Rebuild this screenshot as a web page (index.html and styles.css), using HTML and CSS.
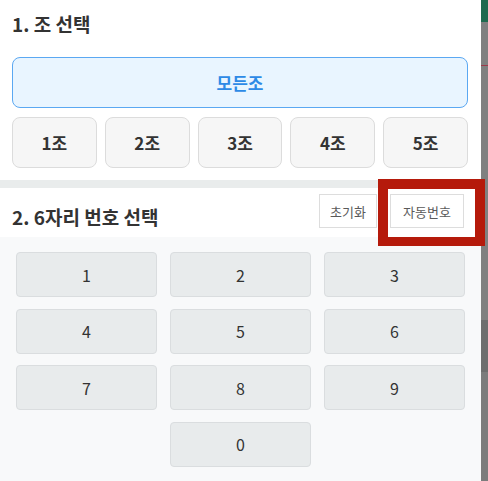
FILE: index.html
```html
<!DOCTYPE html>
<html>

<head>
  <meta charset="UTF-8" />
  <title>번호 선택</title>
  <link rel="stylesheet" href="styles.css">
</head>

<body>
  <div class="page">
    <!-- 1. group select -->
    <section class="group-section">
      <h2 class="section-title">1. 조 선택</h2>
      <button class="all-button">모든조</button>
      <div class="group-row">
        <button class="group-button">1조</button>
        <button class="group-button">2조</button>
        <button class="group-button">3조</button>
        <button class="group-button">4조</button>
        <button class="group-button">5조</button>
      </div>
    </section>

    <div class="divider"></div>

    <!-- 2. number select -->
    <div class="number-header">
      <h2 class="section-title number-title">2. 6자리 번호 선택</h2>
      <div class="header-actions">
        <button class="small-button reset-button">초기화</button>
        <button class="small-button auto-button">자동번호</button>
      </div>
    </div>

    <div class="number-pad">
      <button class="num-button">1</button>
      <button class="num-button">2</button>
      <button class="num-button">3</button>
      <button class="num-button">4</button>
      <button class="num-button">5</button>
      <button class="num-button">6</button>
      <button class="num-button">7</button>
      <button class="num-button">8</button>
      <button class="num-button">9</button>
      <button class="num-button zero">0</button>
    </div>
  </div>

  <div class="side-strip"></div>

  <div class="highlight-box"></div>
</body>

</html>
```

FILE: styles.css
```css
/* Reset default margin and padding */
* {
  margin: 0;
  padding: 0;
  box-sizing: border-box;
}

body {
  position: relative;
  display: flex;
  width: 488px;
  height: 481px;
  overflow: hidden;
  background-color: #ffffff;
  font-family: "Noto Sans CJK KR", "Noto Sans", sans-serif;
  color: #333333;
}

button {
  font-family: inherit;
  cursor: pointer;
}

.page {
  width: 481px;
  display: flex;
  flex-direction: column;
  background-color: #ffffff;
}

/* Section titles */
.section-title {
  font-size: 19px;
  font-weight: bold;
  line-height: 26px;
  color: #333333;
}

/* Group section */
.group-section {
  padding: 11px 13px 12px 12px;
}

.group-section .section-title {
  margin-bottom: 20px;
}

.all-button {
  width: 100%;
  height: 51px;
  background-color: #e9f5ff;
  border: 1.5px solid #5ba8f2;
  border-radius: 8px;
  color: #2d8ae6;
  font-size: 17px;
  font-weight: bold;
}

.group-row {
  display: flex;
  gap: 8px;
  margin-top: 9px;
}

.group-button {
  flex: 1;
  height: 51px;
  background-color: #f6f6f6;
  border: 1px solid #dcdcdc;
  border-radius: 8px;
  color: #333333;
  font-size: 17px;
  font-weight: bold;
}

.divider {
  height: 8px;
  background-color: #e9ecec;
}

/* Number header */
.number-header {
  height: 49px;
  display: flex;
  justify-content: space-between;
  padding: 0 17px 0 12px;
}

.number-title {
  margin-top: 16px;
}

.header-actions {
  display: flex;
  gap: 13px;
  margin-top: 6px;
}

.small-button {
  height: 34px;
  background-color: #ffffff;
  border: 1px solid #dddddd;
  color: #5a5a5a;
  font-size: 13px;
}

.reset-button {
  width: 58px;
}

.auto-button {
  width: 74px;
}

/* Number pad */
.number-pad {
  flex: 1;
  display: grid;
  grid-template-columns: repeat(3, 1fr);
  grid-auto-rows: 45px;
  column-gap: 13px;
  row-gap: 11.5px;
  padding: 15px 16px 0 16px;
  background-color: #f8f9fa;
}

.num-button {
  background-color: #e8ebec;
  border: 1px solid #dadddf;
  border-radius: 4px;
  color: #333333;
  font-size: 16px;
}

.num-button.zero {
  grid-column: 2;
}

/* Right edge strip */
.side-strip {
  width: 7px;
  background: linear-gradient(to bottom,
      #1f6a4f 0px, #1f6a4f 22px,
      #808080 22px, #808080 65px,
      #9c3a4a 65px, #9c3a4a 66px,
      #808080 66px, #808080 320px,
      #6e6e6e 320px, #6e6e6e 372px,
      #7c7c7c 372px);
}

/* Red highlight over the auto number button */
.highlight-box {
  position: absolute;
  left: 378px;
  top: 179px;
  width: 107px;
  height: 67px;
  border: 10px solid #b51a0b;
  border-bottom-width: 9px;
}
```
